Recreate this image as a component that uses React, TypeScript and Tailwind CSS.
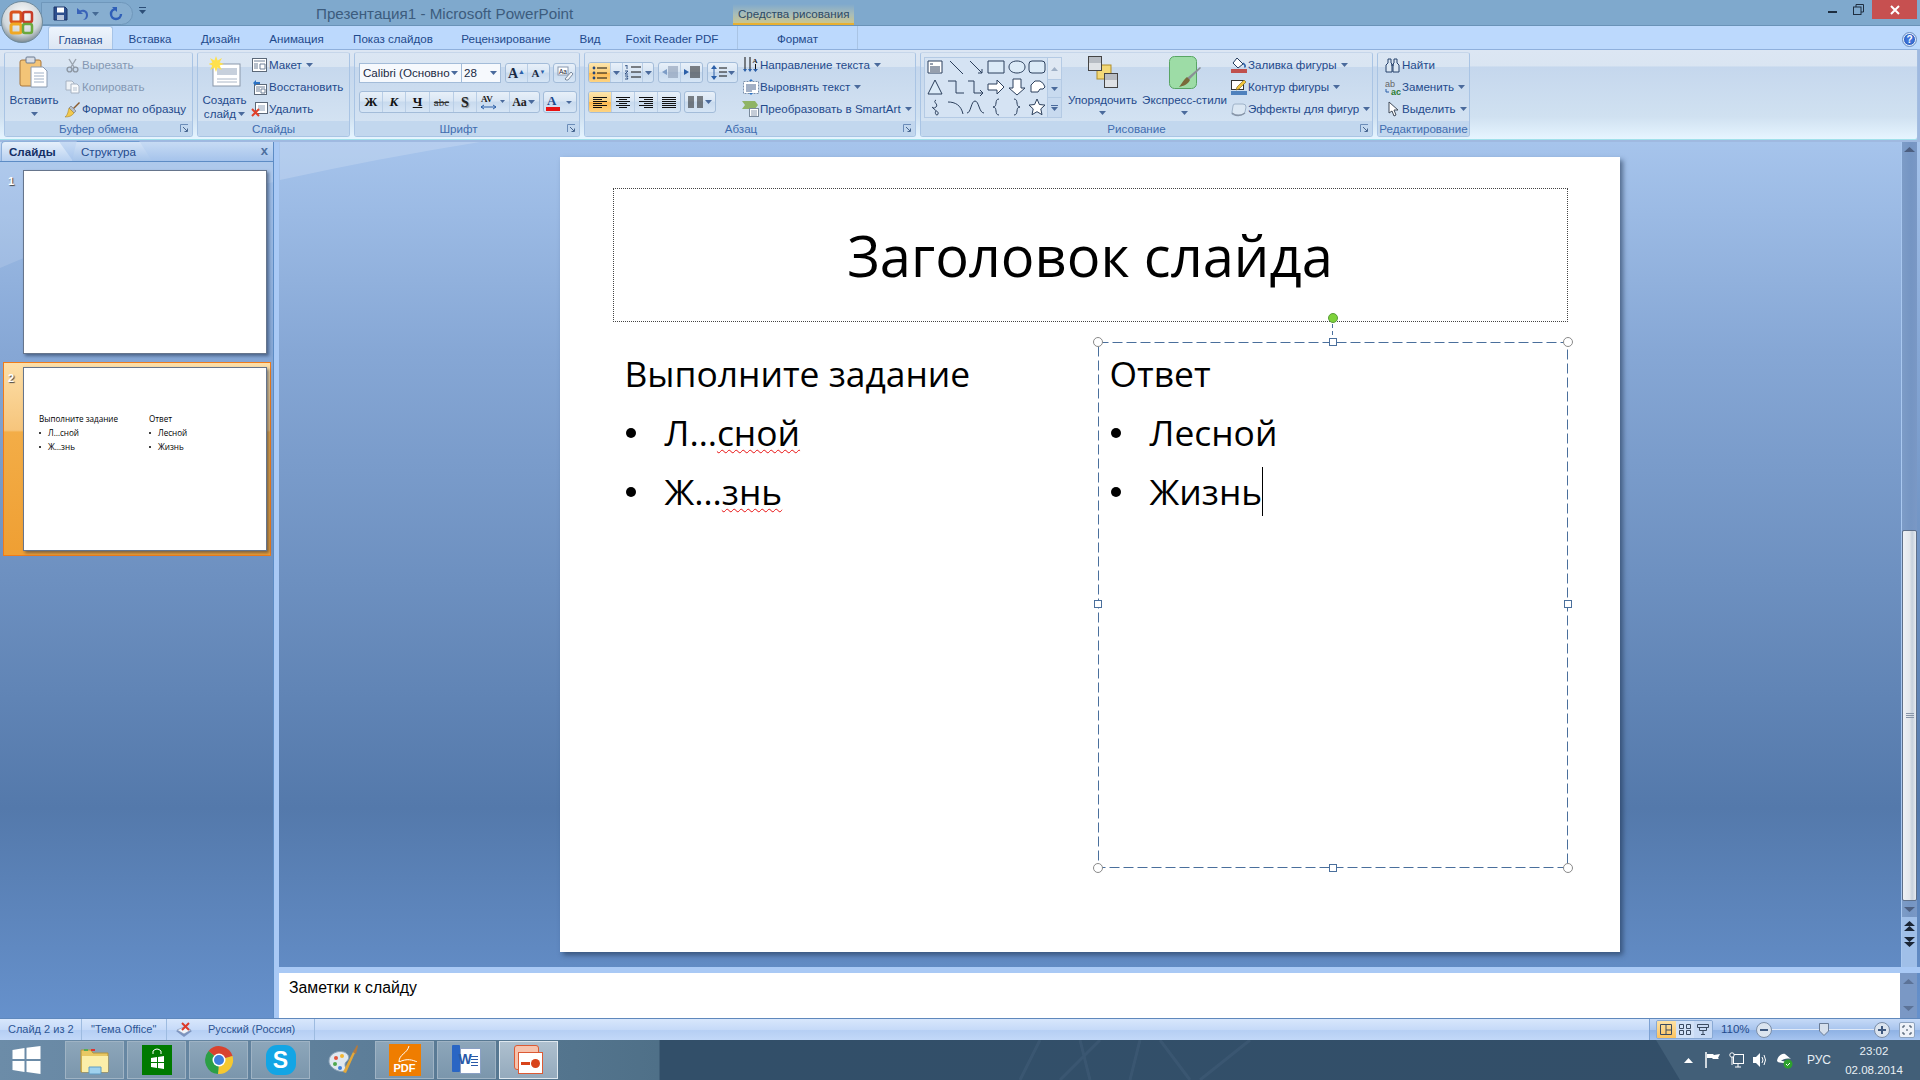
import type { ReactNode } from "react";

function Caret({ color = "#4a6a9c" }: { color?: string }) {
  return (
    <svg width="7" height="4" viewBox="0 0 7 4" className="shrink-0">
      <path d="M0 0h7L3.5 4z" fill={color} />
    </svg>
  );
}

function Launcher() {
  return (
    <svg width="9" height="9" viewBox="0 0 9 9" className="absolute right-[3px] top-[3px]">
      <path d="M.5 8V.5H8" fill="none" stroke="#6b8cb8" />
      <path d="M3 3l4 4M4.5 7.5h3v-3" fill="none" stroke="#47658f" />
    </svg>
  );
}

function Group({ w, label, children, launcher, capPad = "" }: { w: string; label: string; children: ReactNode; launcher?: boolean; capPad?: string }) {
  return (
    <div className={`${w} h-[85px] flex flex-col rounded-[3px] border border-[#a9c4e4] border-t-[#c6d6ea] overflow-hidden shrink-0`}>
      <div className="h-[68px] flex bg-[linear-gradient(180deg,#dbe6f3_0%,#d9e5f2_20%,#c6d8ed_21%,#d3e2f2_100%)]">{children}</div>
      <div className={`relative h-[15px] flex-1 bg-[#c2d7ee] text-[#3f6cae] text-[11.6px] leading-[16px] text-center ${capPad}`}>
        {label}
        {launcher && <Launcher />}
      </div>
    </div>
  );
}

function Row({ icon, label, caret, off }: { icon: ReactNode; label: string; caret?: boolean; off?: boolean }) {
  return (
    <div className={`h-[22px] flex items-center whitespace-nowrap text-[11.6px] ${off ? "text-[#8498b3]" : "text-[#1f4a8c]"}`}>
      <span className="w-[17px] h-[16px] flex items-center justify-center shrink-0">{icon}</span>
      <span className="ml-[1px]">{label}</span>
      {caret && <span className="ml-[4px]"><Caret /></span>}
    </div>
  );
}

function Big({ w, icon, lines }: { w: string; icon: ReactNode; lines: ReactNode }) {
  return (
    <div className={`${w} flex flex-col items-center pt-[3px] text-[11.6px] leading-[14px] text-[#1f4a8c] text-center whitespace-nowrap shrink-0`}>
      <div className="h-[32px] flex items-center justify-center">{icon}</div>
      <div className="mt-[5px] flex flex-col items-center">{lines}</div>
    </div>
  );
}

function Seg({ w, on, children, last }: { w: string; on?: boolean; children: ReactNode; last?: boolean }) {
  return (
    <div className={`${w} h-full flex items-center justify-center shrink-0 ${last ? "" : "border-r border-[#b9cee6]"} ${on ? "bg-[linear-gradient(180deg,#fde6ae_0%,#fbcf7b_50%,#fdb94f_51%,#fdd483_100%)]" : ""}`}>
      {children}
    </div>
  );
}

function Box({ w, h, children }: { w: string; h: string; children: ReactNode }) {
  return (
    <div className={`${w} ${h} flex rounded-[3px] border border-[#a3bcd9] bg-[linear-gradient(180deg,#e8f0f9_0%,#d9e6f4_45%,#c8daee_50%,#d6e5f5_100%)] overflow-hidden shrink-0`}>
      {children}
    </div>
  );
}

function Lines({ rows, color = "#111" }: { rows: [number, number][]; color?: string }) {
  return (
    <svg width="14" height="13" viewBox="0 0 14 13">
      {rows.map(([x, w], i) => (
        <rect key={i} x={x} y={i * 2 + 1} width={w} height="1" fill={color} />
      ))}
    </svg>
  );
}

const left: [number, number][] = [[0, 14], [0, 9], [0, 14], [0, 9], [0, 14], [0, 9]];
const center: [number, number][] = [[0, 14], [3, 8], [0, 14], [3, 8], [0, 14], [3, 8]];
const right: [number, number][] = [[0, 14], [5, 9], [0, 14], [5, 9], [0, 14], [5, 9]];
const full: [number, number][] = [[0, 14], [0, 14], [0, 14], [0, 14], [0, 14], [0, 14]];

function Shape({ d, fill }: { d: string; fill?: string }) {
  return (
    <svg width="20" height="20" viewBox="0 0 20 20" className="shrink-0">
      <path d={d} fill={fill ?? "none"} stroke="#2b3f5c" strokeWidth="1" />
    </svg>
  );
}

const shapes: { d: string; fill?: string }[] = [
  { d: "M3 4h14v12H3z M5 7h3 M5 10h10 M5 12h10 M5 14h10", fill: "#fff" },
  { d: "M4 4l13 13" },
  { d: "M4 4l12 12 M16 12v4h-4" },
  { d: "M2 4h16v12H2z", fill: "#dcebf8" },
  { d: "M10 4c5 0 8 2.7 8 6s-3 6-8 6-8-2.7-8-6 3-6 8-6z", fill: "#dcebf8" },
  { d: "M5 4h10q3 0 3 3v6q0 3-3 3H5q-3 0-3-3V7q0-3 3-3z", fill: "#dcebf8" },
  { d: "M10 3l7 14H3z", fill: "#dcebf8" },
  { d: "M2 4h8v12h8" },
  { d: "M2 4h6v12h8 M14 13l3 3-3 3" },
  { d: "M2 7h9V3l7 7-7 7v-4H2z", fill: "#fff" },
  { d: "M6 2h8v9h4l-8 7-8-7h4z", fill: "#fff" },
  { d: "M8 4h5q4 2 5 6l-2 2h-3l-2 3H4V8z", fill: "#fff" },
  { d: "M11 3c-4 2 3 4 0 7s-5-2-3 1 6 3 5 6-4-1-2-3" },
  { d: "M2 5c7 0 13 3 15 12" },
  { d: "M1 16c4 0 4-12 8-12s4 12 9 12" },
  { d: "M13 2c-5 0-1 8-6 8 5 0 1 8 6 8" },
  { d: "M7 2c5 0 1 8 6 8-5 0-1 8-6 8" },
  { d: "M10 2l2.4 5.5 5.6.6-4.2 3.8 1.2 5.8-5-3-5 3 1.2-5.8L2 8.1l5.6-.6z", fill: "#fff" },
];

function Paste() {
  return (
    <svg width="30" height="32" viewBox="0 0 30 32">
      <rect x="1" y="4" width="21" height="26" rx="2" fill="#f3c477" stroke="#a8763c" />
      <rect x="7" y="1" width="9" height="6" rx="1" fill="#d8dde5" stroke="#6b7a90" />
      <path d="M12 11h12l4 4v16H12z" fill="#fff" stroke="#8a9ab0" />
      <path d="M15 17h10M15 20h10M15 23h10M15 26h10" stroke="#9fb0c6" />
    </svg>
  );
}

function Scissors() {
  return (
    <svg width="13" height="15" viewBox="0 0 13 15">
      <path d="M3 1l5 8M10 1L5 9" stroke="#9aa3ae" strokeWidth="1.4" fill="none" />
      <circle cx="3.5" cy="11.5" r="2.4" fill="none" stroke="#8d97a3" strokeWidth="1.4" />
      <circle cx="9.5" cy="11.5" r="2.4" fill="none" stroke="#8d97a3" strokeWidth="1.4" />
    </svg>
  );
}

function CopyIcon() {
  return (
    <svg width="15" height="14" viewBox="0 0 15 14">
      <path d="M1 1h6l2 2v7H1z" fill="#eef2f6" stroke="#a6b2c2" />
      <path d="M6 4h6l2 2v7H6z" fill="#f8fafc" stroke="#a6b2c2" />
      <path d="M8 8h4M8 10h4" stroke="#b6c2d0" />
    </svg>
  );
}

function Brush() {
  return (
    <svg width="17" height="17" viewBox="0 0 17 17">
      <path d="M9 7l6-6 1 1-6 6z" fill="#8a5a2a" />
      <path d="M7 5l5 5-2 2-5-5z" fill="#b6bcc6" stroke="#6d7480" strokeWidth=".6" />
      <path d="M5 7l5 5c-2 3-5 4-9 4 3-2 3-6 4-9z" fill="#f2c94e" stroke="#a9862a" strokeWidth=".6" />
    </svg>
  );
}

function NewSlide() {
  return (
    <svg width="32" height="32" viewBox="0 0 32 32">
      <rect x="4" y="8" width="27" height="22" fill="#fff" stroke="#8a98aa" />
      <rect x="8" y="12" width="20" height="7" fill="#c7d0dc" />
      <path d="M8 23h20M8 26h20" stroke="#aab6c6" />
      <path d="M7 0l1.6 4.4L13 2l-2.4 4.4L15 8l-4.4 1.6L13 14 8.6 11.6 7 16l-1.6-4.4L1 14l2.4-4.4L-1 8l4.4-1.6L1 2l4.4 2.4z" fill="#ffe14d" />
    </svg>
  );
}

function Layout() {
  return (
    <svg width="15" height="14" viewBox="0 0 15 14">
      <rect x=".5" y=".5" width="14" height="13" fill="#fff" stroke="#5b6878" />
      <path d="M2 3h11M2 6h4M2 8h4M2 10h4M8 6h5v5H8z" stroke="#6f8098" fill="none" />
    </svg>
  );
}

function Reset() {
  return (
    <svg width="15" height="15" viewBox="0 0 15 15">
      <rect x="2.5" y="4.5" width="12" height="10" fill="#fff" stroke="#5b6878" />
      <path d="M4 7h9M4 9h4M4 11h4M9 9h4v4H9z" stroke="#6f8098" fill="none" />
      <path d="M1 3l3-3v2h4v2H4v2z" fill="#2b72c4" />
    </svg>
  );
}

function Del() {
  return (
    <svg width="17" height="15" viewBox="0 0 17 15">
      <rect x="4.5" y=".5" width="12" height="11" fill="#fff" stroke="#5b6878" />
      <path d="M7 3h7v6H7z" fill="#c7d0dc" />
      <path d="M1 7l7 7M8 7l-7 7" stroke="#e0402a" strokeWidth="2" />
    </svg>
  );
}

function Para1() {
  return (
    <svg width="15" height="14" viewBox="0 0 15 14">
      <circle cx="2" cy="2" r="1.4" fill="#26477c" />
      <circle cx="2" cy="7" r="1.4" fill="#26477c" />
      <circle cx="2" cy="12" r="1.4" fill="#26477c" />
      <path d="M5 2h10M5 7h10M5 12h10" stroke="#111" />
    </svg>
  );
}

function Para2() {
  return (
    <svg width="17" height="15" viewBox="0 0 17 15">
      <path d="M1 1l2-1v4M1 6h3L1 9h3M1 11h3l-1 1.5L4 14H1" fill="none" stroke="#26477c" strokeWidth=".9" />
      <path d="M7 2h10M7 7h10M7 12h10" stroke="#111" />
    </svg>
  );
}

function Indent({ dir }: { dir: "l" | "r" }) {
  const col = dir === "l" ? "#7c8ca6" : "#111";
  return (
    <svg width="16" height="13" viewBox="0 0 16 13">
      <path d="M6 1h10M6 3h10M6 5h10M6 7h10M6 9h10M6 11h10" stroke={col} />
      {dir === "l" ? <path d="M5 3L0 6l5 3z" fill="#7c9cc6" /> : <path d="M0 3l5 3-5 3z" fill="#2b5fa8" />}
    </svg>
  );
}

function LineSpacing() {
  return (
    <svg width="16" height="15" viewBox="0 0 16 15">
      <path d="M3 0l3 4H0zM3 15l3-4H0z" fill="#2b5fa8" />
      <path d="M3 4v7" stroke="#2b5fa8" />
      <path d="M8 3h8M8 7h8M8 11h8" stroke="#111" />
    </svg>
  );
}

function Columns() {
  return (
    <svg width="15" height="13" viewBox="0 0 15 13">
      <path d="M0 1h6M0 3h6M0 5h6M0 7h6M0 9h6M0 11h6M9 1h6M9 3h6M9 5h6M9 7h6M9 9h6M9 11h6" stroke="#111" />
    </svg>
  );
}

function TextDir() {
  return (
    <svg width="16" height="16" viewBox="0 0 16 16">
      <path d="M2 0v13M7 0v13" stroke="#111" />
      <path d="M0 12l2 3 2-3zM5 12l2 3 2-3zM10 12l2.5 3 2.5-3z" fill="#2b5fa8" />
      <path d="M12.5 7V12" stroke="#111" />
      <text x="9.5" y="6" fontSize="7" fontFamily="Liberation Serif" fontWeight="700" fill="#222">A</text>
    </svg>
  );
}

function AlignText() {
  return (
    <svg width="16" height="16" viewBox="0 0 16 16">
      <rect x=".5" y="2.5" width="15" height="12" fill="#fff" stroke="#7a90ac" strokeDasharray="2 1" />
      <path d="M3 6h10M3 8h10M3 10h10M3 12h6" stroke="#44618c" />
      <path d="M8 0l2 2H6zM8 16l2-2H6z" fill="#2b72c4" />
    </svg>
  );
}

function SmartArt() {
  return (
    <svg width="17" height="16" viewBox="0 0 17 16">
      <path d="M0 0h13l3 4-3 4H0l3-4z" fill="#8fb465" />
      <rect x="7.5" y="7.5" width="9" height="8" fill="#fff" stroke="#7a8a9c" />
      <path d="M9 10h6M9 12h6M9 14h6" stroke="#8a9ab0" />
    </svg>
  );
}

function Arrange() {
  return (
    <svg width="30" height="32" viewBox="0 0 30 32">
      <rect x="9" y="9" width="14" height="14" fill="#f3d977" stroke="#b08d2a" />
      <rect x=".5" y=".5" width="13" height="14" fill="#dfe2e6" stroke="#444" />
      <rect x="1" y="1" width="12" height="6" fill="#b7bcc3" />
      <rect x="16.5" y="17.5" width="13" height="14" fill="#dfe2e6" stroke="#444" />
      <rect x="17" y="18" width="12" height="6" fill="#b7bcc3" />
    </svg>
  );
}

function QuickStyles() {
  return (
    <svg width="32" height="33" viewBox="0 0 32 33">
      <rect x=".5" y=".5" width="27" height="32" rx="5" fill="#9ddca6" stroke="#58a564" />
      <path d="M31 11l1 1-12 12-2-2z" fill="#8a8f96" />
      <path d="M18 21l3 3c-2 4-6 6-11 7 3-3 4-7 8-10z" fill="#7a6a3a" />
    </svg>
  );
}

function Fill() {
  return (
    <svg width="16" height="16" viewBox="0 0 16 16">
      <path d="M6 1l6 6-5 4-5-5z" fill="#fff" stroke="#223a5c" />
      <path d="M12 6c2 2 3 3 1.5 4.5" stroke="#2b5fa8" strokeWidth="1.6" fill="none" />
      <rect x="0" y="12" width="16" height="4" fill="#c0504d" />
    </svg>
  );
}

function Outline() {
  return (
    <svg width="16" height="16" viewBox="0 0 16 16">
      <rect x=".5" y="1.5" width="12" height="9" fill="#fff" stroke="#333" />
      <path d="M13 1l2 2-7 7-3 1 1-3z" fill="#f3c53d" stroke="#6a5a20" strokeWidth=".6" />
      <rect x="0" y="12" width="16" height="4" fill="#4f81bd" />
    </svg>
  );
}

function Effects() {
  return (
    <svg width="16" height="16" viewBox="0 0 16 16">
      <path d="M4 3h8q3 0 3 3l-1 5q-1 3-4 3H3q-3 0-2-3l1-6q0-2 2-2z" fill="#dbe7f3" stroke="#9eb2c8" />
      <path d="M1 12q6 5 13 0" stroke="#8794a6" strokeWidth="1.5" fill="none" />
    </svg>
  );
}

function Binoc() {
  return (
    <svg width="15" height="15" viewBox="0 0 15 15">
      <path d="M3 1h3v4l1 1v8H1V7l2-2zM9 1h3v4l2 2v7H8V6l1-1z" fill="#dbe7f3" stroke="#24406b" />
      <path d="M6 7h3" stroke="#24406b" />
    </svg>
  );
}

function Replace() {
  return (
    <svg width="16" height="17" viewBox="0 0 16 17">
      <text x="0" y="8" fontSize="9" fontFamily="Liberation Sans" fill="#666">ab</text>
      <text x="6" y="16" fontSize="9" fontFamily="Liberation Sans" fontWeight="700" fill="#2e7d32">ac</text>
      <path d="M1 10v3h3" stroke="#2b5fa8" fill="none" />
    </svg>
  );
}

function Pointer() {
  return (
    <svg width="14" height="16" viewBox="0 0 14 16">
      <path d="M3 1v11l3-2 2 5 2-1-2-5h4z" fill="#fff" stroke="#404a58" />
    </svg>
  );
}

function Ribbon() {
  return (
    <div className="h-[91px] shrink-0 flex items-center gap-[4px] pl-[4px] mr-[2px] rounded-br-[3px] border-t border-[#8fb0dc] border-b border-b-[#9fe0ea] border-r border-r-[#a3bde0] bg-[linear-gradient(180deg,#dce6f3_0%,#dae5f2_18%,#c5d7ed_19%,#d0e1f1_75%,#e6f5ff_100%)]">
      <Group w="w-[189px]" label="Буфер обмена" launcher>
        <Big
          w="w-[58px]"
          icon={<Paste />}
          lines={
            <>
              <span>Вставить</span>
              <span className="mt-[5px]"><Caret /></span>
            </>
          }
        />
        <div className="ml-[1px] pt-[1px] flex flex-col">
          <Row icon={<Scissors />} label="Вырезать" off />
          <Row icon={<CopyIcon />} label="Копировать" off />
          <Row icon={<Brush />} label="Формат по образцу" />
        </div>
      </Group>
      <Group w="w-[153px]" label="Слайды">
        <Big
          w="w-[53px]"
          icon={<NewSlide />}
          lines={
            <>
              <span>Создать</span>
              <span className="flex items-center gap-[2px]">слайд <Caret /></span>
            </>
          }
        />
        <div className="pt-[1px] flex flex-col">
          <Row icon={<Layout />} label="Макет" caret />
          <Row icon={<Reset />} label="Восстановить" />
          <Row icon={<Del />} label="Удалить" />
        </div>
      </Group>
      <Group w="w-[226px]" label="Шрифт" launcher capPad="pr-[17px]">
        <div className="pl-[4px] pt-[10px] flex flex-col gap-[8px]">
          <div className="flex h-[20px]">
            <div className="w-[103px] h-full border border-[#a3bcd9] bg-[#f6f9fd] flex items-center justify-between pl-[3px] pr-[3px] text-[11.6px] text-[#1a2a44] whitespace-nowrap">
              <span>Calibri (Основно</span>
              <Caret />
            </div>
            <div className="w-[39px] h-full border border-l-0 border-[#a3bcd9] bg-[#f6f9fd] flex items-center justify-between pl-[2px] pr-[3px] text-[11.6px] text-[#1a2a44]">
              <span>28</span>
              <Caret />
            </div>
            <div className="ml-[4px]">
              <Box w="w-[45px]" h="h-[20px]">
                <Seg w="w-[22px]">
                  <span className="font-['Liberation_Serif',serif] font-bold text-[14px] text-[#1a2a44]">A<sup className="text-[7px] text-[#2b5fa8]">▲</sup></span>
                </Seg>
                <Seg w="w-[21px]" last>
                  <span className="font-['Liberation_Serif',serif] font-bold text-[11px] text-[#1a2a44]">A<sup className="text-[6px] text-[#2b5fa8]">▼</sup></span>
                </Seg>
              </Box>
            </div>
            <div className="ml-[3px]">
              <Box w="w-[23px]" h="h-[20px]">
                <Seg w="w-[21px]" last>
                  <svg width="16" height="15" viewBox="0 0 16 15">
                    <rect x="1" y="1" width="10" height="8" fill="#fff" stroke="#8a9ab0" />
                    <text x="2" y="7.5" fontSize="6.5" fontFamily="Liberation Sans" fill="#223">Aa</text>
                    <path d="M8 13l6-7 2 2-5 6H9z" fill="#f3f5f8" stroke="#7c8ca0" />
                  </svg>
                </Seg>
              </Box>
            </div>
          </div>
          <div className="flex h-[22px] gap-[3px]">
            <Box w="w-[181px]" h="h-[22px]">
              <Seg w="w-[23px]"><span className="font-['Liberation_Serif',serif] font-bold text-[13px] text-[#111]">Ж</span></Seg>
              <Seg w="w-[23px]"><span className="font-['Liberation_Serif',serif] font-bold italic text-[13px] text-[#111]">К</span></Seg>
              <Seg w="w-[24px]"><span className="font-['Liberation_Serif',serif] font-bold underline text-[13px] text-[#111]">Ч</span></Seg>
              <Seg w="w-[24px]"><span className="font-['Liberation_Serif',serif] line-through text-[11px] text-[#333]">abc</span></Seg>
              <Seg w="w-[23px]"><span className="font-['Liberation_Serif',serif] font-bold text-[14px] text-[#222] [text-shadow:1px_1px_1px_#888]">S</span></Seg>
              <Seg w="w-[33px]">
                <svg width="26" height="17" viewBox="0 0 26 17">
                  <text x="1" y="8" fontSize="9" fontFamily="Liberation Serif" fontWeight="700" fill="#222">AV</text>
                  <path d="M1 13h15M1 13l3-2M1 13l3 2M16 13l-3-2M16 13l-3 2" stroke="#2b5fa8" fill="none" />
                  <path d="M20 6h5l-2.5 3z" fill="#4a6a9c" />
                </svg>
              </Seg>
              <Seg w="w-[27px]" last>
                <span className="flex items-center gap-[1px] font-['Liberation_Serif',serif] font-bold text-[12px] text-[#222]">Aa <Caret /></span>
              </Seg>
            </Box>
            <Box w="w-[34px]" h="h-[22px]">
              <Seg w="w-[32px]" last>
                <svg width="30" height="18" viewBox="0 0 30 18">
                  <text x="2" y="12" fontSize="13" fontFamily="Liberation Serif" fontWeight="700" fill="#1f4a8c">A</text>
                  <rect x="1" y="14" width="14" height="4" fill="#e81313" />
                  <path d="M21 8h6l-3 3z" fill="#4a6a9c" />
                </svg>
              </Seg>
            </Box>
          </div>
        </div>
      </Group>
      <Group w="w-[332px]" label="Абзац" launcher capPad="pr-[18px]">
        <div className="pl-[3px] pt-[9px] flex flex-col gap-[8px] shrink-0">
          <div className="flex h-[21px] gap-[4px]">
            <Box w="w-[66px]" h="h-[21px]">
              <Seg w="w-[22px]" on><Para1 /></Seg>
              <Seg w="w-[12px]"><Caret /></Seg>
              <Seg w="w-[20px]"><Para2 /></Seg>
              <Seg w="w-[10px]" last><Caret /></Seg>
            </Box>
            <Box w="w-[45px]" h="h-[21px]">
              <Seg w="w-[22px]"><Indent dir="l" /></Seg>
              <Seg w="w-[21px]" last><Indent dir="r" /></Seg>
            </Box>
            <Box w="w-[31px]" h="h-[21px]">
              <Seg w="w-[29px]" last>
                <span className="flex items-center gap-[1px]"><LineSpacing /><Caret /></span>
              </Seg>
            </Box>
          </div>
          <div className="flex h-[22px] gap-[3px]">
            <Box w="w-[93px]" h="h-[22px]">
              <Seg w="w-[23px]" on><Lines rows={left} /></Seg>
              <Seg w="w-[23px]"><Lines rows={center} /></Seg>
              <Seg w="w-[23px]"><Lines rows={right} /></Seg>
              <Seg w="w-[22px]" last><Lines rows={full} /></Seg>
            </Box>
            <Box w="w-[32px]" h="h-[22px]">
              <Seg w="w-[30px]" last>
                <span className="flex items-center gap-[2px]"><Columns /><Caret /></span>
              </Seg>
            </Box>
          </div>
        </div>
        <div className="ml-[4px] pt-[1px] flex flex-col">
          <Row icon={<TextDir />} label="Направление текста" caret />
          <Row icon={<AlignText />} label="Выровнять текст" caret />
          <Row icon={<SmartArt />} label="Преобразовать в SmartArt" caret />
        </div>
      </Group>
      <Group w="w-[453px]" label="Рисование" launcher capPad="pr-[20px]">
        <div className="ml-[3px] mt-[4px] w-[138px] h-[61px] flex shrink-0 border border-[#b4cae4] bg-[#d5e3f3]">
          <div className="w-[123px] -mt-[1px] grid grid-cols-6 auto-rows-[20px] justify-items-center">
            {shapes.map((s, i) => (
              <Shape key={i} d={s.d} fill={s.fill} />
            ))}
          </div>
          <div className="w-[14px] flex flex-col border-l border-[#b4cae4]">
            <div className="h-[21px] bg-[#dfe8f3] flex items-center justify-center">
              <svg width="7" height="4"><path d="M0 4h7L3.5 0z" fill="#9fb0c6" /></svg>
            </div>
            <div className="h-[19px] bg-[#c8daef] border-y border-[#b4cae4] flex items-center justify-center"><Caret /></div>
            <div className="flex-1 bg-[#c8daef] flex flex-col items-center justify-center gap-[1px]">
              <div className="w-[7px] h-px bg-[#4a6a9c]" />
              <Caret />
            </div>
          </div>
        </div>
        <Big
          w="w-[79px] ml-[1px]"
          icon={<Arrange />}
          lines={
            <>
              <span>Упорядочить</span>
              <span className="mt-[4px]"><Caret /></span>
            </>
          }
        />
        <Big
          w="w-[85px]"
          icon={<QuickStyles />}
          lines={
            <>
              <span>Экспресс-стили</span>
              <span className="mt-[4px]"><Caret /></span>
            </>
          }
        />
        <div className="ml-[3px] pt-[1px] flex flex-col">
          <Row icon={<Fill />} label="Заливка фигуры" caret />
          <Row icon={<Outline />} label="Контур фигуры" caret />
          <Row icon={<Effects />} label="Эффекты для фигур" caret />
        </div>
      </Group>
      <Group w="w-[93px]" label="Редактирование">
        <div className="ml-[6px] pt-[1px] flex flex-col">
          <Row icon={<Binoc />} label="Найти" />
          <Row icon={<Replace />} label="Заменить" caret />
          <Row icon={<Pointer />} label="Выделить" caret />
        </div>
      </Group>
    </div>
  );
}

const tabs = [
  { name: "Главная", w: "w-[65px]" },
  { name: "Вставка", w: "w-[74px]" },
  { name: "Дизайн", w: "w-[67px]" },
  { name: "Анимация", w: "w-[85px]" },
  { name: "Показ слайдов", w: "w-[108px]" },
  { name: "Рецензирование", w: "w-[118px]" },
  { name: "Вид", w: "w-[50px]" },
  { name: "Foxit Reader PDF", w: "w-[114px]" },
];

function OfficeButton() {
  return (
    <svg width="44" height="44" viewBox="0 0 44 44" className="absolute left-0 top-0 z-10">
      <defs>
        <radialGradient id="orb" cx="50%" cy="35%" r="65%">
          <stop offset="0%" stopColor="#ffffff" />
          <stop offset="70%" stopColor="#cfd6da" />
          <stop offset="100%" stopColor="#7b8a92" />
        </radialGradient>
      </defs>
      <circle cx="22" cy="22" r="20.5" fill="url(#orb)" stroke="#6f8a9c" />
      <rect x="11" y="12" width="10" height="10" rx="2" fill="none" stroke="#d9541e" strokeWidth="3" />
      <rect x="23" y="12" width="9" height="10" rx="2" fill="none" stroke="#c73d2a" strokeWidth="2.5" />
      <rect x="11" y="24" width="10" height="9" rx="2" fill="none" stroke="#f0a824" strokeWidth="3" />
      <rect x="23" y="24" width="9" height="9" rx="2" fill="none" stroke="#6aa83c" strokeWidth="2.5" />
    </svg>
  );
}

function TitleBar() {
  return (
    <div className="h-[26px] shrink-0 flex bg-[#7fa9cd] border-b border-[#6a93b8]">
      <div className="ml-[41px] mt-[2px] w-[92px] h-[23px] rounded-r-full border border-[#6f97bb] bg-[#87aed0] flex items-center pl-[11px]">
        <svg width="15" height="15" viewBox="0 0 15 15">
          <path d="M1 1h11l2 2v11H1z" fill="#2d4f8e" stroke="#1c3566" />
          <rect x="4" y="1.5" width="7" height="5" fill="#fff" />
          <rect x="4" y="9" width="7" height="5" fill="#b9c6dc" />
        </svg>
        <span className="ml-[7px] flex items-center gap-[3px]">
          <svg width="14" height="14" viewBox="0 0 14 14">
            <path d="M2 1v6h6L6 5c2-1 5 0 5 3 0 2-1 4-3 5 4 0 5-3 5-5 0-5-5-6-8-4.5z" fill="#3a63b8" />
          </svg>
          <Caret color="#456a95" />
        </span>
        <svg width="14" height="14" viewBox="0 0 14 14" className="ml-[10px]">
          <path d="M7 2a5 5 0 1 0 5 5" fill="none" stroke="#2f5fb8" strokeWidth="2.4" />
          <path d="M3 0h5v5z" fill="#2f5fb8" />
        </svg>
      </div>
      <div className="ml-[6px] mt-[7px] flex flex-col gap-[2px] items-center w-[7px]">
        <div className="w-[7px] h-px bg-[#2d4f78]" />
        <Caret color="#2d4f78" />
      </div>
      <div className="ml-[170px] leading-[28px] text-[15.2px] text-[#3c5c7e] whitespace-nowrap">Презентация1 - Microsoft PowerPoint</div>
      <div className="ml-[160px] mt-[4px] w-[121px] h-[21px] border-b-2 border-[#e8b030] bg-[linear-gradient(180deg,#7fa9cd_0%,#a9bdb8_55%,#c9c58f_100%)] text-center text-[11.6px] leading-[19px] text-[#2e4a66]">
        Средства рисования
      </div>
      <div className="ml-auto flex items-start">
        <svg width="9" height="3" viewBox="0 0 9 3" className="mt-[11px]">
          <rect width="9" height="2" fill="#1e2e40" />
        </svg>
        <svg width="11" height="11" viewBox="0 0 11 11" className="ml-[16px] mt-[4px]">
          <path d="M3 3V.5h7.5V8H8" fill="none" stroke="#1e2e40" />
          <rect x=".5" y="3" width="7.5" height="7.5" fill="none" stroke="#1e2e40" />
        </svg>
        <div className="ml-[8px] mr-[3px] w-[45px] h-[19px] bg-[#c75050] flex items-center justify-center">
          <svg width="10" height="10" viewBox="0 0 10 10">
            <path d="M1 1l8 8M9 1l-8 8" stroke="#fff" strokeWidth="2" />
          </svg>
        </div>
      </div>
    </div>
  );
}

function TabRow() {
  return (
    <div className="h-[23px] shrink-0 flex items-end bg-[#bcd9fd] pl-[48px] text-[11.6px] text-[#1f4a8c]">
      {tabs.map((t, i) => (
        <div
          key={t.name}
          className={`${t.w} h-full text-center leading-[26px] whitespace-nowrap ${
            i === 0 ? "rounded-t-[3px] border border-b-0 border-[#a6c4e8] bg-[linear-gradient(180deg,#eef5fd_0%,#dce6f3_100%)]" : ""
          }`}
        >
          {t.name}
        </div>
      ))}
      <div className="ml-[8px] w-[121px] h-full border-x border-[#a9c4e4] text-center leading-[26px]">Формат</div>
      <div className="ml-auto mr-[4px] mb-[3px] w-[13px] h-[13px] rounded-full border border-[#e8f0fa] outline outline-[#6f8fc0] bg-[radial-gradient(circle,#3f73d8_40%,#1f4fb0_100%)] text-white text-center font-bold text-[10px] leading-[11px]">?</div>
    </div>
  );
}

function Thumb({ n, selected, children }: { n: number; selected?: boolean; children?: ReactNode }) {
  return (
    <div
      className={`relative w-[268px] h-[194px] ml-[3px] pl-[19px] pt-[4px] ${
        selected ? "border border-[#f07c1a] bg-[linear-gradient(180deg,#fddfa8_0%,#f6c57c_35%,#f3ad47_36%,#ef9f33_100%)]" : "border border-transparent"
      }`}
    >
      <span className="absolute left-[4px] top-[7px] text-[11px] font-bold text-white [text-shadow:1px_1px_1px_#444]">{n}</span>
      <div className="w-[244px] h-[184px] bg-white border border-[#66758c] shadow-[2px_2px_3px_rgba(30,50,80,0.55)] overflow-hidden">{children}</div>
    </div>
  );
}

function MiniCol({ title, items }: { title: string; items: string[] }) {
  return (
    <div className="w-[110px] text-[8.1px] leading-[14px] text-black font-['Open_Sans',sans-serif]">
      <div>{title}</div>
      {items.map((t) => (
        <div key={t} className="flex items-center">
          <span className="w-[9px] shrink-0 flex">
            <span className="w-[2px] h-[2px] rounded-full bg-black" />
          </span>
          {t}
        </div>
      ))}
    </div>
  );
}

function SidePanel() {
  return (
    <div className="relative w-[274px] shrink-0 flex flex-col border-r border-[#5d8cc5]">
      <div className="relative h-[20px] shrink-0 flex items-end pl-[1px] border-b border-[#5d8cc5] bg-[linear-gradient(180deg,#c7dbf4_0%,#a5c3eb_100%)] text-[11.6px]">
        <div className="w-[72px] h-[20px] border-t border-l border-[#8eb0da] rounded-tl-[4px] bg-[linear-gradient(180deg,#e6f0fb_0%,#b7d0f0_100%)] [clip-path:polygon(0_0,80%_0,100%_100%,0_100%)] pl-[7px] leading-[20px] font-bold text-[#142f66]">
          Слайды
        </div>
        <div className="-ml-[1px] h-[20px] w-[80px] pl-[9px] leading-[20px] text-[#1f4a8c] border-t border-[#6f9ad0] [clip-path:polygon(6%_0,84%_0,100%_100%,0_100%)] bg-[linear-gradient(180deg,#d5e4f7_0%,#a6c4ea_100%)]">
          Структура
        </div>
        <span className="absolute right-[5px] top-0 font-bold text-[13px] leading-[18px] text-[#4d6f9f]">x</span>
      </div>
      <div className="pt-[3px] flex flex-col gap-[3px]">
        <Thumb n={1} />
        <Thumb n={2} selected>
          <div className="pl-[15px] pt-[44px] flex">
            <MiniCol title="Выполните задание" items={["Л…сной", "Ж…знь"]} />
            <MiniCol title="Ответ" items={["Лесной", "Жизнь"]} />
          </div>
        </Thumb>
      </div>
    </div>
  );
}

function Bullet({ children }: { children: ReactNode }) {
  return (
    <div className="flex items-center h-[59px]">
      <span className="w-[40px] shrink-0 pl-px">
        <span className="block w-[10px] h-[10px] rounded-full bg-black" />
      </span>
      <span className="relative">{children}</span>
    </div>
  );
}

const squiggle = "underline decoration-wavy decoration-[#e81010] decoration-1 underline-offset-[3px]";

function Handle({ className, round }: { className: string; round?: boolean }) {
  return round ? (
    <span className={`absolute w-[10px] h-[10px] rounded-full bg-white border border-[#8a8a8a] ${className}`} />
  ) : (
    <span className={`absolute w-[8px] h-[8px] bg-white border border-[#4a6f9c] ${className}`} />
  );
}

function Slide() {
  return (
    <div className="w-[1060px] h-[795px] bg-white shadow-[3px_3px_5px_rgba(30,50,80,0.6)] pl-[53px] pr-[52px] pt-[31px] shrink-0 text-black font-['Open_Sans',sans-serif]">
      <div className="h-[134px] flex items-center justify-center border border-dotted border-[#444] text-[56px] leading-none">Заголовок слайда</div>
      <div className="mt-[20px] flex gap-[16px] text-[35.4px] leading-[59px]">
        <div className="w-[469px] pl-[12px] pt-[2px]">
          <div className="h-[59px]">Выполните задание</div>
          <Bullet>Л…<span className={squiggle}>сной</span></Bullet>
          <Bullet>Ж…<span className={squiggle}>знь</span></Bullet>
        </div>
        <div className="relative w-[470px] h-[526px] pl-[12px] pt-[2px]">
          <svg width="470" height="526" className="absolute inset-0 overflow-visible">
            <rect x=".5" y=".5" width="469" height="525" fill="none" stroke="#4a6f9c" strokeDasharray="10 4" />
            <path d="M234.5 0V-18" stroke="#4a6f9c" strokeDasharray="4 3" />
          </svg>
          <span className="absolute left-[230px] top-[-29px] w-[10px] h-[10px] rounded-full bg-[#7ed23a] border border-[#5a9c3a]" />
          <Handle round className="-left-[5px] -top-[5px]" />
          <Handle round className="-right-[5px] -top-[5px]" />
          <Handle round className="-left-[5px] -bottom-[5px]" />
          <Handle round className="-right-[5px] -bottom-[5px]" />
          <Handle className="left-[231px] -top-[4px]" />
          <Handle className="left-[231px] -bottom-[4px]" />
          <Handle className="-left-[4px] top-[258px]" />
          <Handle className="-right-[4px] top-[258px]" />
          <div className="h-[59px]">Ответ</div>
          <Bullet>Лесной</Bullet>
          <Bullet>
            Жизнь
            <span className="absolute -right-px top-[5px] w-px h-[49px] bg-black" />
          </Bullet>
        </div>
      </div>
    </div>
  );
}

function Scrollbar() {
  return (
    <div className="w-[16px] mr-[3px] shrink-0 flex flex-col items-center bg-[linear-gradient(90deg,#7d9cc7_0%,#7595c3_60%,#7a98c5_100%)] border-l border-[#a9c8f0]">
      <svg width="11" height="6" className="mt-[5px]"><path d="M0 5h11L5.5 0z" fill="#4d5f80" /></svg>
      <div className="mt-[377px] w-[15px] h-[371px] rounded-[2px] border border-[#5e6f88] bg-[linear-gradient(90deg,#eef1f5_0%,#e3e7ec_50%,#c6d0dc_70%,#e8ecf1_100%)] flex flex-col items-center justify-center gap-[1px]">
        <div className="w-[8px] h-px bg-[#8895a8]" />
        <div className="w-[8px] h-px bg-[#8895a8]" />
        <div className="w-[8px] h-px bg-[#8895a8]" />
      </div>
      <svg width="11" height="5" className="mt-[6px]"><path d="M0 0h11L5.5 5z" fill="#4d5f80" /></svg>
      <div className="w-full flex-1 mt-[5px] bg-[#a0bfe8] flex flex-col items-center pt-[4px] gap-[4px]">
        <svg width="11" height="11" viewBox="0 0 11 11"><path d="M0 5h11L5.5 0zM0 10h11L5.5 5z" fill="#1a2535" /></svg>
        <svg width="11" height="11" viewBox="0 0 11 11"><path d="M0 1h11L5.5 6zM0 6h11L5.5 11z" fill="#1a2535" /></svg>
      </div>
    </div>
  );
}

function Body() {
  return (
    <div className="relative flex-1 min-h-0 flex mt-[2px] bg-[linear-gradient(180deg,#a6c4ec_0%,#86a7d5_24%,#5479ab_76%,#6691cc_100%)]">
      <svg width="1920" height="300" className="absolute left-0 top-0 pointer-events-none">
        <path d="M0 126Q130 70 274 40V0H0z" fill="#ffffff" fillOpacity=".13" />
        <path d="M280 38Q380 16 480 0H280z" fill="#ffffff" fillOpacity=".18" />
      </svg>
      <SidePanel />
      <div className="w-[5px] shrink-0 bg-[#a9c9f5]" />
      <div className="relative flex-1 min-w-0 flex flex-col">
        <div className="flex-1 min-h-0 flex">
          <div className="flex-1 min-w-0 flex items-center justify-center pr-px">
            <Slide />
          </div>
          <Scrollbar />
        </div>
        <div className="h-[6px] shrink-0 bg-[#a9c9f5]" />
        <div className="h-[45px] shrink-0 flex">
          <div className="flex-1 bg-white px-[10px] pt-[3px] font-['Liberation_Sans',sans-serif] text-[15.8px] text-black">Заметки к слайду</div>
          <div className="w-[17px] mr-[3px] bg-[#7a98c5] flex flex-col items-center justify-between py-[6px]">
            <svg width="11" height="6"><path d="M0 5h11L5.5 0z" fill="#5c7398" /></svg>
            <svg width="11" height="6"><path d="M0 0h11L5.5 5z" fill="#5c7398" /></svg>
          </div>
        </div>
      </div>
    </div>
  );
}

function StatusBar() {
  return (
    <div className="h-[22px] shrink-0 flex items-center border-t border-[#5f88bc] bg-[linear-gradient(180deg,#d8e7fc_0%,#c6daf8_50%,#b6cff4_55%,#c2d8f8_100%)] text-[11px] text-[#2c5594] whitespace-nowrap">
      <div className="w-[82px] pl-[8px] border-r border-[#9dbbe0] h-full leading-[20px]">Слайд 2 из 2</div>
      <div className="w-[85px] pl-[9px] border-r border-[#9dbbe0] h-full leading-[20px]">"Тема Office"</div>
      <div className="w-[148px] pl-[8px] border-r border-[#9dbbe0] h-full flex items-center">
        <svg width="18" height="16" viewBox="0 0 18 16" className="shrink-0">
          <path d="M1 9l8-4 8 4-8 6z" fill="#7c94c0" />
          <path d="M2 8l7-3 7 3-7 4z" fill="#f0f4f9" stroke="#788cae" strokeWidth=".6" />
          <path d="M7 1l7 7M14 1L7 8" stroke="#dd3a2a" strokeWidth="2" />
        </svg>
        <span className="ml-[15px]">Русский (Россия)</span>
      </div>
      <div className="ml-auto h-full w-[271px] flex items-center border-l border-[#7ea2d3] bg-[linear-gradient(180deg,#c6daf7_0%,#a9c5ee_50%,#8fb2e4_55%,#a6c4ef_100%)] pl-[6px]">
        <div className="w-[57px] h-[19px] flex rounded-[2px] border border-[#89a9d4] overflow-hidden">
          <div className="w-[19px] flex items-center justify-center bg-[linear-gradient(180deg,#fde2a6_0%,#fbc25e_100%)]">
            <svg width="12" height="11"><path d="M.5.5h11v10H.5zM6 .5v10M6 6h5.5" fill="none" stroke="#3a4a60" /></svg>
          </div>
          <div className="w-[19px] flex items-center justify-center bg-[#d3e2f7]">
            <svg width="12" height="11"><path d="M.5.5h4v4h-4zM7.5.5h4v4h-4zM.5 6.5h4v4h-4zM7.5 6.5h4v4h-4z" fill="none" stroke="#3a4a60" /></svg>
          </div>
          <div className="w-[18px] flex items-center justify-center bg-[#c8daf4]">
            <svg width="12" height="11"><path d="M.5.5h11v3H.5zM2.5 3.5h7v3h-7zM6 6.5v4M4 10.5h4" fill="none" stroke="#3a4a60" /></svg>
          </div>
        </div>
        <span className="ml-[8px] w-[28px] text-[11.5px] text-[#1f4a8c]">110%</span>
        <span className="ml-[7px] w-[16px] h-[16px] rounded-full border border-[#7c8ea8] bg-[#dbe4ef] flex items-center justify-center">
          <span className="w-[8px] h-[2px] bg-[#405a80]" />
        </span>
        <div className="relative w-[102px] h-px bg-[#dfe9f8] flex items-center">
          <svg width="10" height="13" viewBox="0 0 10 13" className="absolute left-[47px] -top-[6px]">
            <path d="M.5.5h9V8L5 12.5.5 8z" fill="#d5dfec" stroke="#6a7c96" />
          </svg>
        </div>
        <span className="w-[16px] h-[16px] rounded-full border border-[#7c8ea8] bg-[#dbe4ef] flex items-center justify-center">
          <svg width="10" height="10"><path d="M5 1v8M1 5h8" stroke="#405a80" strokeWidth="2" /></svg>
        </span>
        <span className="ml-[9px] w-[16px] h-[16px] rounded-[2px] border border-[#8da3c0] bg-[#eef2f8] flex items-center justify-center">
          <svg width="12" height="12"><path d="M1 3h2M3 1v2M11 3H9M9 1v2M1 9h2M3 11V9M11 9H9M9 11V9M5 6h2" stroke="#36485f" /></svg>
        </span>
      </div>
    </div>
  );
}

function FolderIco() {
  return (
    <svg width="30" height="30" viewBox="0 0 30 30">
      <path d="M1 5h10l2 3h15v19H1z" fill="#e9c863" stroke="#b4943c" />
      <path d="M2 11h26v16H2z" fill="#fbeea9" />
      <path d="M9 22h12v7H9z" fill="#9fd2ee" stroke="#5f9cc4" />
      <rect x="11" y="4" width="4" height="2" fill="#d33" />
      <rect x="4" y="4" width="4" height="2" fill="#5a5" />
    </svg>
  );
}

function StoreIco() {
  return (
    <div className="w-[30px] h-[30px] bg-[#007a00] flex items-center justify-center">
      <svg width="20" height="24" viewBox="0 0 20 24">
        <path d="M6 6V3q4-4 8 0v3" fill="none" stroke="#fff" />
        <path d="M4 10l6-1v5H4zM11 9l6-1v6h-6zM4 15h6v5l-6-1zM11 15h6v6l-6-1z" fill="#fff" />
      </svg>
    </div>
  );
}

function ChromeIco() {
  return (
    <svg width="30" height="30" viewBox="0 0 30 30">
      <path d="M15 15L4.5 6A14 14 0 0 1 28.5 11z" fill="#d9432f" />
      <path d="M15 15l13.5-4A14 14 0 0 1 14 29z" fill="#f6c830" />
      <path d="M15 15L14 29A14 14 0 0 1 4.5 6z" fill="#2c9f45" />
      <circle cx="15" cy="15" r="6.5" fill="#fff" />
      <circle cx="15" cy="15" r="5" fill="#3f7fdb" />
    </svg>
  );
}

function SkypeIco() {
  return (
    <div className="w-[30px] h-[30px] rounded-[11px] bg-[#12a5e5] flex items-center justify-center text-white font-bold text-[23px] leading-none">S</div>
  );
}

function PaintIco() {
  return (
    <svg width="32" height="32" viewBox="0 0 32 32">
      <path d="M2 17c0-7 8-11 15-9 5 2 6 6 3 9-3 2-2 5-1 8-1 3-6 3-10 1-4-2-7-5-7-9z" fill="#dfe8f0" stroke="#8ba3b8" />
      <circle cx="9" cy="14" r="2" fill="#e2553d" />
      <circle cx="15" cy="12" r="2" fill="#f2b632" />
      <circle cx="8" cy="20" r="2" fill="#4fa84f" />
      <circle cx="13" cy="24" r="2" fill="#3f7fdb" />
      <path d="M16 28L26 8l2 1-9 20z" fill="#e3a83a" />
      <path d="M26 8l4-7 1 1-2 8z" fill="#b47a3e" />
    </svg>
  );
}

function PdfIco() {
  return (
    <div className="w-[32px] h-[32px] bg-[#ef7d00] flex flex-col items-center justify-end text-white text-[11px] font-bold leading-[12px] pb-[2px]">
      <svg width="24" height="16" viewBox="0 0 24 16"><path d="M6 16C6 8 14 8 16 0M6 16c8-4 14-2 18 0" stroke="#fff" fill="none" /></svg>
      PDF
    </div>
  );
}

function WordIco() {
  return (
    <div className="relative w-[30px] h-[30px]">
      <div className="absolute left-[8px] top-[3px] w-[21px] h-[26px] bg-white border border-[#8aa0c4] flex flex-col gap-[2px] justify-center items-end pr-[2px]">
        <span className="w-[7px] h-[1px] bg-[#2a5aa8]" />
        <span className="w-[7px] h-[1px] bg-[#2a5aa8]" />
        <span className="w-[7px] h-[1px] bg-[#2a5aa8]" />
        <span className="w-[7px] h-[1px] bg-[#2a5aa8]" />
      </div>
      <div className="absolute left-0 top-0 w-[8px] h-[27px] bg-[#2a66c4] rounded-[1px]" />
      <div className="absolute left-[7px] top-[6px] text-[#2a5aa8] font-bold text-[14px] leading-[16px]">W</div>
    </div>
  );
}

function PptIco() {
  return (
    <div className="relative w-[30px] h-[30px]">
      <div className="absolute left-0 top-0 w-[25px] h-[25px] rounded-[3px] bg-[#f6c3ae] border border-[#dc5a35]" />
      <div className="absolute left-[4px] top-[7px] w-[25px] h-[22px] bg-white border border-[#dc5a35] flex items-center justify-center gap-[1px]">
        <span className="w-[9px] h-[3px] bg-[#d8431a]" />
        <span className="w-[9px] h-[9px] rounded-full bg-[#d8431a]" />
      </div>
    </div>
  );
}

function TaskBtn({ active, plain, children }: { active?: boolean; plain?: boolean; children: ReactNode }) {
  return (
    <div
      className={`w-[59px] h-[38px] mt-px flex items-center justify-center shrink-0 ${
        plain
          ? ""
          : active
            ? "border border-[#dfe8ef] bg-[linear-gradient(180deg,#aec0cf_0%,#94aabd_100%)]"
            : "border border-[#9fb3c4] bg-[linear-gradient(180deg,#8da6ba_0%,#7b96ac_100%)]"
      }`}
    >
      {children}
    </div>
  );
}

function Taskbar() {
  return (
    <div className="relative h-[40px] shrink-0 flex bg-[linear-gradient(90deg,#6c8ca8_0%,#5c7d98_20%,#4f7088_34.3%,#324f69_34.4%,#334f69_100%)] text-white">
      <svg width="1920" height="40" className="absolute inset-0 pointer-events-none">
        <path d="M1040 0l-20 40M1080 0l10 40M1100 0l-40 40M1140 0l-10 40M1160 0l30 40M1250 0l-50 40" stroke="#5c7b96" strokeOpacity=".18" strokeWidth="3" fill="none" />
        <path d="M1656 0H1920V40H1680z" fill="#425f78" />
      </svg>
      <div className="relative w-[65px] shrink-0 flex items-center pl-[12px]">
        <svg width="29" height="28" viewBox="0 0 28 28">
          <path d="M0 4l12-2v11H0zM14 1.7L28 0v13H14zM0 15h12v11L0 24zM14 15h14v13l-14-2z" fill="#fff" />
        </svg>
      </div>
      <div className="relative flex gap-[3px]">
        <TaskBtn><FolderIco /></TaskBtn>
        <TaskBtn><StoreIco /></TaskBtn>
        <TaskBtn><ChromeIco /></TaskBtn>
        <TaskBtn><SkypeIco /></TaskBtn>
        <TaskBtn plain><PaintIco /></TaskBtn>
        <TaskBtn><PdfIco /></TaskBtn>
        <TaskBtn><WordIco /></TaskBtn>
        <TaskBtn active><PptIco /></TaskBtn>
      </div>
      <div className="relative ml-auto flex items-center pr-[19px]">
        <svg width="9" height="5" viewBox="0 0 9 5"><path d="M0 5h9L4.5 0z" fill="#fff" /></svg>
        <svg width="16" height="17" viewBox="0 0 16 17" className="ml-[12px]">
          <path d="M1 0v16" stroke="#fff" strokeWidth="1.5" />
          <path d="M2 2h6l1 1 6-1-2 4 1 1H8L7 6H2z" fill="#fff" />
        </svg>
        <svg width="16" height="16" viewBox="0 0 16 16" className="ml-[8px]">
          <rect x="4.5" y="2.5" width="10" height="9" fill="none" stroke="#fff" />
          <circle cx="3" cy="3" r="2.2" fill="#334f69" stroke="#fff" />
          <path d="M3 5v8M6 15h6M9 12v3" stroke="#fff" />
        </svg>
        <svg width="16" height="16" viewBox="0 0 16 16" className="ml-[7px]">
          <path d="M1 5h3l4-4v14l-4-4H1z" fill="#fff" />
          <path d="M10 5q2 3 0 6M12 3q3 5 0 10" stroke="#fff" fill="none" />
        </svg>
        <svg width="17" height="18" viewBox="0 0 17 18" className="ml-[8px]">
          <path d="M1 10c1-6 6-8 8-7l6 5c-4-1-8 0-10 2 1 0 4 0 5 2-4 0-8 0-9-2z" fill="#fff" />
          <circle cx="12" cy="13" r="4.5" fill="#2ea12e" />
          <path d="M10 13l1.5 1.5L14 12" stroke="#fff" fill="none" />
        </svg>
        <span className="ml-[14px] w-[26px] text-[12px] text-[#e8eff5]">РУС</span>
        <div className="ml-[14px] w-[54px] flex flex-col items-center gap-[5px] text-[11.5px] leading-[14px] text-[#e8eff5]">
          <span>23:02</span>
          <span>02.08.2014</span>
        </div>
      </div>
    </div>
  );
}

export default function App() {
  return (
    <div className="relative w-[1920px] h-[1080px] flex flex-col overflow-hidden bg-[#9fb9e0] font-['Liberation_Sans',sans-serif]">
      <OfficeButton />
      <TitleBar />
      <TabRow />
      <Ribbon />
      <Body />
      <StatusBar />
      <Taskbar />
    </div>
  );
}
